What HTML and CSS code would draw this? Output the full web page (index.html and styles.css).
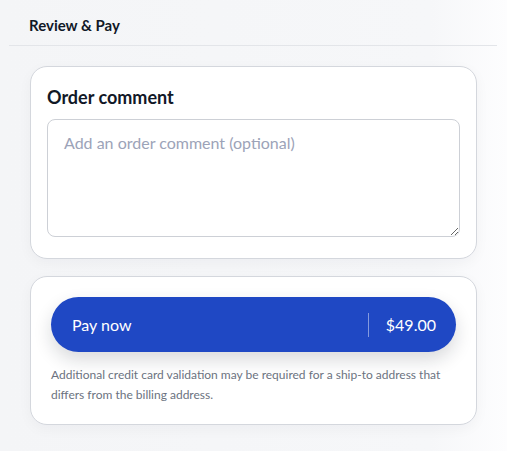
FILE: index.html
```html
<!DOCTYPE html>
<html lang="en">
<head>
    <meta charset="UTF-8">
    <meta name="viewport" content="width=device-width, initial-scale=1.0">
    <title>Review &amp; Pay</title>
    <link rel="stylesheet" href="styles.css">
</head>
<body>
    <div class="page">
        <div class="page-header">
            <h2>Review &amp; Pay</h2>
        </div>

        <!-- Order comment -->
        <div class="card comment-card">
            <h3>Order comment</h3>
            <textarea class="comment-input" placeholder="Add an order comment (optional)"></textarea>
        </div>

        <!-- Payment -->
        <div class="card pay-card">
            <button class="pay-btn" type="button">
                <span class="pay-label">Pay now</span>
                <span class="pay-divider"></span>
                <span class="pay-amount">$49.00</span>
            </button>
            <p class="pay-note">Additional credit card validation may be required for a ship-to address that differs from the billing address.</p>
        </div>
    </div>
</body>
</html>
```

FILE: styles.css
```css
* {
    box-sizing: border-box;
    margin: 0;
    padding: 0;
    font-family: 'Segoe UI', 'Lato', sans-serif;
}

body {
    background: linear-gradient(90deg, #f4f5f7 0%, #f6f7f9 85%, #fdfdfe 100%);
    height: 100vh;
    color: #111827;
}

.page {
    margin: 0 10px 0 9px;
}

.page-header {
    padding: 15px 20px 0;
    height: 46px;
    border-bottom: 1px solid #e3e5e9;
}

.page-header h2 {
    font-size: 15px;
    font-weight: 700;
    line-height: 20px;
}

.card {
    background: #fff;
    border: 1px solid #d4d7dd;
    border-radius: 17px;
    margin: 0 20px 0 21px;
    box-shadow: 0 4px 14px rgba(17, 24, 39, 0.04);
}

.comment-card {
    margin-top: 20px;
    padding: 17px 16px 21px;
}

.comment-card h3 {
    font-size: 18px;
    font-weight: 700;
    line-height: 26px;
    margin-bottom: 9px;
}

.comment-input {
    display: block;
    width: 100%;
    height: 118px;
    padding: 11px 16px;
    border: 1px solid #cdd0d6;
    border-radius: 8px;
    font-size: 16px;
    line-height: 24px;
    color: #111827;
    resize: vertical;
    outline: none;
}

.comment-input::placeholder {
    color: #9ca3b8;
}

.pay-card {
    margin-top: 17px;
    padding: 20px 20px 19px;
}

.pay-btn {
    display: flex;
    align-items: center;
    width: 100%;
    height: 55px;
    padding: 0 20px 0 21px;
    background: #1f48c4;
    color: #fff;
    border: none;
    border-radius: 28px;
    font-size: 16px;
    cursor: pointer;
    box-shadow: 0 8px 18px rgba(17, 24, 39, 0.16);
}

.pay-label {
    flex: 1;
    text-align: left;
}

.pay-divider {
    width: 1px;
    height: 24px;
    background: rgba(255, 255, 255, 0.45);
    margin-right: 17px;
}

.pay-btn:hover {
    background: #1a3fae;
}

.pay-note {
    margin-top: 13px;
    font-size: 12px;
    line-height: 20px;
    color: #6b7280;
}
```
